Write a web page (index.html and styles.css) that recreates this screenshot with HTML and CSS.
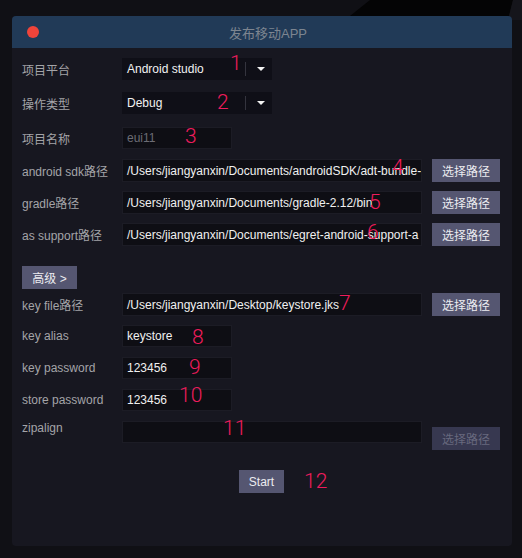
FILE: index.html
```html
<!DOCTYPE html>
<html>
<head>
<meta charset="utf-8">
<link rel="stylesheet" href="styles.css">
</head>
<body>
<svg class="backdrop" width="522" height="20" viewBox="0 0 522 20"><polygon points="345,20 370,0 513,0 508,20" fill="#040405"/><polygon points="513,0 522,0 522,20 508,20" fill="#15151b"/></svg>
<div class="window">
  <div class="titlebar">
    <span class="close"></span>
    <span class="title">发布移动APP</span>
  </div>
  <div class="content">
    <div class="row r-first">
      <label class="label">项目平台</label>
      <div class="select"><span class="val">Android studio</span><span class="divider"></span><span class="arrow"></span></div>
    </div>
    <div class="row r-g12">
      <label class="label">操作类型</label>
      <div class="select"><span class="val">Debug</span><span class="divider"></span><span class="arrow"></span></div>
    </div>
    <div class="row r-g13">
      <label class="label">项目名称</label>
      <div class="input short muted">eui11</div>
    </div>
    <div class="row tall r-g10">
      <label class="label">android sdk路径</label>
      <div class="input long">/Users/jiangyanxin/Documents/androidSDK/adt-bundle-</div>
      <button class="btn">选择路径</button>
    </div>
    <div class="row tall r-g9">
      <label class="label">gradle路径</label>
      <div class="input long">/Users/jiangyanxin/Documents/gradle-2.12/bin</div>
      <button class="btn">选择路径</button>
    </div>
    <div class="row tall r-g9">
      <label class="label">as support路径</label>
      <div class="input long">/Users/jiangyanxin/Documents/egret-android-support-a</div>
      <button class="btn">选择路径</button>
    </div>
    <div class="row tall r-g20">
      <button class="btn adv">高级 &gt;</button>
    </div>
    <div class="row tall r-g4">
      <label class="label">key file路径</label>
      <div class="input long">/Users/jiangyanxin/Desktop/keystore.jks</div>
      <button class="btn">选择路径</button>
    </div>
    <div class="row r-g9">
      <label class="label">key alias</label>
      <div class="input short">keystore</div>
    </div>
    <div class="row r-g10">
      <label class="label">key password</label>
      <div class="input short">123456</div>
    </div>
    <div class="row r-g10">
      <label class="label">store password</label>
      <div class="input short">123456</div>
    </div>
    <div class="row zip r-g10">
      <label class="label">zipalign</label>
      <div class="input long"></div>
      <button class="btn disabled">选择路径</button>
    </div>
    <div class="start-row">
      <button class="btn start">Start</button>
    </div>
  </div>
  <span class="num n1">1</span>
  <span class="num n2">2</span>
  <span class="num n3">3</span>
  <span class="num n4">4</span>
  <span class="num n5">5</span>
  <span class="num n6">6</span>
  <span class="num n7">7</span>
  <span class="num n8">8</span>
  <span class="num n9">9</span>
  <span class="num n10">10</span>
  <span class="num n11">11</span>
  <span class="num n12">12</span>
</div>
</body>
</html>
```
FILE: styles.css
```css
html, body {
  margin: 0;
  padding: 0;
}
body {
  background: #101015;
  width: 522px;
  height: 558px;
  overflow: hidden;
  position: relative;
  padding: 16px 10px 0 12px;
  box-sizing: border-box;
  font-family: "Liberation Sans", "Noto Sans CJK SC", sans-serif;
}
.backdrop {
  position: absolute;
  left: 0;
  top: 0;
}
.window {
  position: relative;
  width: 500px;
  height: 530px;
  background: #171720;
  border-radius: 4px;
  overflow: hidden;
}
.titlebar {
  height: 32px;
  background: #213a57;
  display: flex;
  align-items: center;
  justify-content: center;
  position: relative;
  padding-left: 12px;
}
.close {
  position: absolute;
  left: 15px;
  top: 10px;
  width: 12px;
  height: 12px;
  border-radius: 50%;
  background: #f0443a;
}
.title {
  color: #7d8590;
  font-size: 13px;
  font-family: "Liberation Sans", "Noto Sans CJK SC", sans-serif;
}
.content {
  padding: 10px 12px 0 10px;
  display: flex;
  flex-direction: column;
}
.row {
  display: flex;
  align-items: center;
  height: 22px;
}
.row.tall { height: 23px; }
.r-g4 { margin-top: 4px; }
.r-g9 { margin-top: 9px; }
.r-g10 { margin-top: 10px; }
.r-g12 { margin-top: 12px; }
.r-g13 { margin-top: 13px; }
.r-g20 { margin-top: 20px; }
.label {
  width: 100px;
  flex: none;
  color: #a4a4a8;
  font-size: 12px;
  font-family: "Liberation Sans", "Noto Sans CJK SC", sans-serif;
}
.select {
  width: 150px;
  height: 22px;
  background: #0f0f17;
  display: flex;
  align-items: center;
  box-sizing: border-box;
  padding-left: 5px;
}
.select .val {
  flex: 1;
  color: #f2f2f2;
  font-size: 12px;
}
.divider {
  width: 1px;
  height: 14px;
  background: #34343e;
}
.arrow {
  width: 0;
  height: 0;
  border-left: 4px solid transparent;
  border-right: 4px solid transparent;
  border-top: 4px solid #f2f2f2;
  margin: 0 7px 0 11px;
}
.input {
  height: 100%;
  box-sizing: border-box;
  background: #0e0e14;
  border: 1px solid #1c1c25;
  color: #f0f0f0;
  font-size: 12px;
  padding-left: 4px;
  display: flex;
  align-items: center;
  white-space: nowrap;
  overflow: hidden;
}
.input.short { width: 110px; }
.input.long { width: 300px; }
.input.muted { color: #6c6c74; }
.row.zip {
  align-items: flex-start;
  height: 29px;
}
.row.zip .input { height: 22px; }
.btn {
  margin-left: 10px;
  width: 68px;
  height: 23px;
  border: none;
  padding: 0;
  background: #555671;
  color: #ececf0;
  font-size: 12px;
  font-family: "Liberation Sans", "Noto Sans CJK SC", sans-serif;
}
.btn.adv {
  margin-left: 0;
  width: 55px;
}
.btn.disabled {
  margin-top: 6px;
  background: #373850;
  color: #68697e;
}
.start-row {
  margin-top: 20px;
  display: flex;
  padding-left: 217px;
}
.btn.start {
  margin-left: 0;
  width: 45px;
}
.num {
  position: absolute;
  color: #ee1c5c;
  font-family: "Roboto", "Liberation Sans", sans-serif;
  font-weight: 300;
  font-size: 21px;
  line-height: 21px;
}
.n1 { left: 218px; top: 37px; }
.n2 { left: 205px; top: 76px; }
.n3 { left: 173px; top: 110px; }
.n4 { left: 380px; top: 141px; }
.n5 { left: 357px; top: 176px; }
.n6 { left: 355px; top: 206px; }
.n7 { left: 327px; top: 277px; }
.n8 { left: 180px; top: 311px; }
.n9 { left: 177px; top: 341px; }
.n10 { left: 167px; top: 369px; }
.n11 { left: 211px; top: 402px; }
.n12 { left: 292px; top: 455px; }
```
